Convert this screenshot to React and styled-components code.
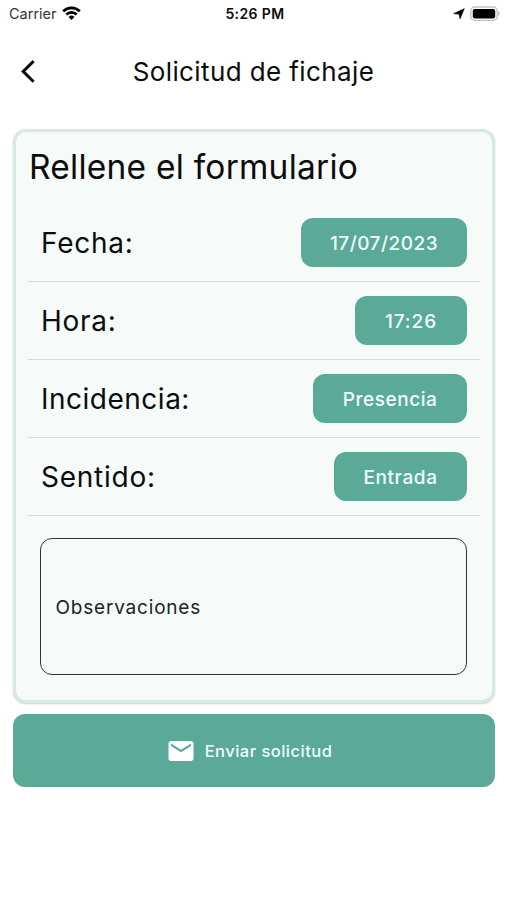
import React, { useState } from "react";
import styled, { createGlobalStyle } from "styled-components";
import { MdEmail } from "react-icons/md";

const fields = [
  { label: "Fecha:", value: "17/07/2023", width: 166, spacing: 0.5, labelSpacing: 0.75 },
  { label: "Hora:", value: "17:26", width: 112, spacing: 0.9, labelSpacing: 0.7 },
  { label: "Incidencia:", value: "Presencia", width: 154, spacing: 0.55, labelSpacing: 0.5 },
  { label: "Sentido:", value: "Entrada", width: 133, spacing: 0.6, labelSpacing: 0.75 },
];

const App = () => {
  const [notes, setNotes] = useState("");

  return (
    <Screen>
      <GlobalStyle />
      <StatusBar>
        <Carrier>
          <span>Carrier</span>
          <svg width="19" height="15" viewBox="0 0 19 15">
            <g fill="none" stroke="#000" strokeWidth="2.7">
              <path d="M1.2 5.3a11.8 11.8 0 0 1 16.6 0" />
              <path d="M4.3 8.5a7.4 7.4 0 0 1 10.4 0" />
            </g>
            <path d="M6.6 11a4.1 4.1 0 0 1 5.8 0L9.5 14z" />
          </svg>
        </Carrier>
        <Clock>5:26 PM</Clock>
        <Indicators>
          <svg width="12" height="12" viewBox="0 0 12 12">
            <path d="M11.4.6 7 11.1 6.1 6.3.6 5.6z" stroke="#000" strokeWidth=".5" />
          </svg>
          <svg width="31" height="16" viewBox="0 0 31 16">
            <rect x=".8" y="1" width="26.4" height="13.4" rx="4" fill="#fff" stroke="#c4c4c4" strokeWidth="1.4" />
            <rect x="2.8" y="3" width="22.4" height="9.4" rx="1.8" />
            <path d="M28.4 5.3a2.8 2.8 0 0 1 0 4.8z" fill="#b5b5b5" />
          </svg>
        </Indicators>
      </StatusBar>

      <Header>
        <BackButton aria-label="Volver">
          <svg width="16" height="26" viewBox="0 0 16 26">
            <path d="M13.6 3.1 3.2 13.4l10.4 10.3" fill="none" stroke="#0c0c0c" strokeWidth="3" />
          </svg>
        </BackButton>
        <HeaderTitle>Solicitud de fichaje</HeaderTitle>
      </Header>

      <Card>
        <CardTitle>Rellene el formulario</CardTitle>
        {fields.map((field) => (
          <Row key={field.label}>
            <Label $spacing={field.labelSpacing}>{field.label}</Label>
            <Chip $width={field.width} $spacing={field.spacing}>
              {field.value}
            </Chip>
          </Row>
        ))}
        <Notes
          placeholder="Observaciones"
          value={notes}
          onChange={(e) => setNotes(e.target.value)}
        />
      </Card>

      <SendButton>
        <MdEmail className="icon" />
        <span>Enviar solicitud</span>
      </SendButton>
    </Screen>
  );
};

const GlobalStyle = createGlobalStyle`
  * {
    box-sizing: border-box;
  }
  body {
    margin: 0;
    background: #fff;
  }
  button, input {
    font-family: inherit;
  }
`;

const Screen = styled.div`
  width: 507px;
  height: 900px;
  overflow: hidden;
  background: #fff;
  color: #0c0c0c;
  font-family: Inter, "Liberation Sans", sans-serif;
`;

const StatusBar = styled.div`
  display: grid;
  grid-template-columns: 1fr auto 1fr;
  align-items: center;
  height: 27px;
  padding: 0 6px 0 9px;
`;

const Carrier = styled.div`
  display: flex;
  align-items: center;
  gap: 5px;
  font-size: 14.5px;
  color: #333;

  svg {
    margin-top: -1px;
  }
`;

const Clock = styled.div`
  font-size: 14px;
  font-weight: 600;
  letter-spacing: 0.4px;
`;

const Indicators = styled.div`
  display: flex;
  align-items: center;
  justify-content: flex-end;
  gap: 5px;
`;

const Header = styled.header`
  display: grid;
  grid-template-columns: 60px 1fr 60px;
  align-items: center;
  height: 88px;
`;

const BackButton = styled.button`
  display: flex;
  padding: 0 0 0 20px;
  border: none;
  background: none;
`;

const HeaderTitle = styled.h1`
  margin: 0;
  font-size: 26px;
  font-weight: 400;
  letter-spacing: 0.4px;
  text-align: center;
  white-space: nowrap;
`;

const Card = styled.section`
  width: 482px;
  height: 574px;
  margin: 14px 0 0 13px;
  padding: 0 12px;
  border: 3px solid #d6e9e3;
  border-radius: 13px;
  background: #f6fbf9;
  box-shadow: 0 1px 2px rgba(0, 0, 0, 0.2);
`;

const CardTitle = styled.h2`
  height: 72px;
  margin: 0;
  padding-left: 1px;
  font-size: 33.5px;
  font-weight: 400;
  line-height: 71px;
  letter-spacing: 0.23px;
  white-space: nowrap;
`;

const Row = styled.div`
  display: flex;
  align-items: center;
  justify-content: space-between;
  height: 78.1px;
  padding: 0 13px;
  border-bottom: 1px solid #c9e3db;
`;

const Label = styled.span`
  font-size: 28px;
  letter-spacing: ${({ $spacing }) => $spacing}px;
`;

const Chip = styled.button`
  width: ${({ $width }) => $width}px;
  height: 49px;
  padding: 2px 0 0;
  border: none;
  border-radius: 12px;
  background: #5aaa97;
  color: #effffa;
  font-size: 19px;
  font-weight: 500;
  letter-spacing: ${({ $spacing }) => $spacing}px;
`;

const Notes = styled.input`
  display: block;
  width: 427px;
  height: 137px;
  margin: 21.6px 0 0 12px;
  padding: 2px 14.5px 0;
  border: 1.5px solid #333;
  border-radius: 12px;
  outline: none;
  background: transparent;
  color: #222;
  font-size: 19px;
  letter-spacing: 0.8px;

  &::placeholder {
    color: #222;
    opacity: 1;
  }
`;

const SendButton = styled.button`
  display: flex;
  align-items: center;
  justify-content: center;
  gap: 9px;
  width: 482px;
  height: 73px;
  margin: 11px 0 0 13px;
  padding: 0 10px 0 0;
  border: none;
  border-radius: 12px;
  background: #5aaa97;
  color: #effffa;
  font-size: 16.5px;
  font-weight: 500;
  letter-spacing: 0.48px;

  .icon {
    width: 30px;
    height: 30px;
    color: #fff;
  }
`;

export default App;
